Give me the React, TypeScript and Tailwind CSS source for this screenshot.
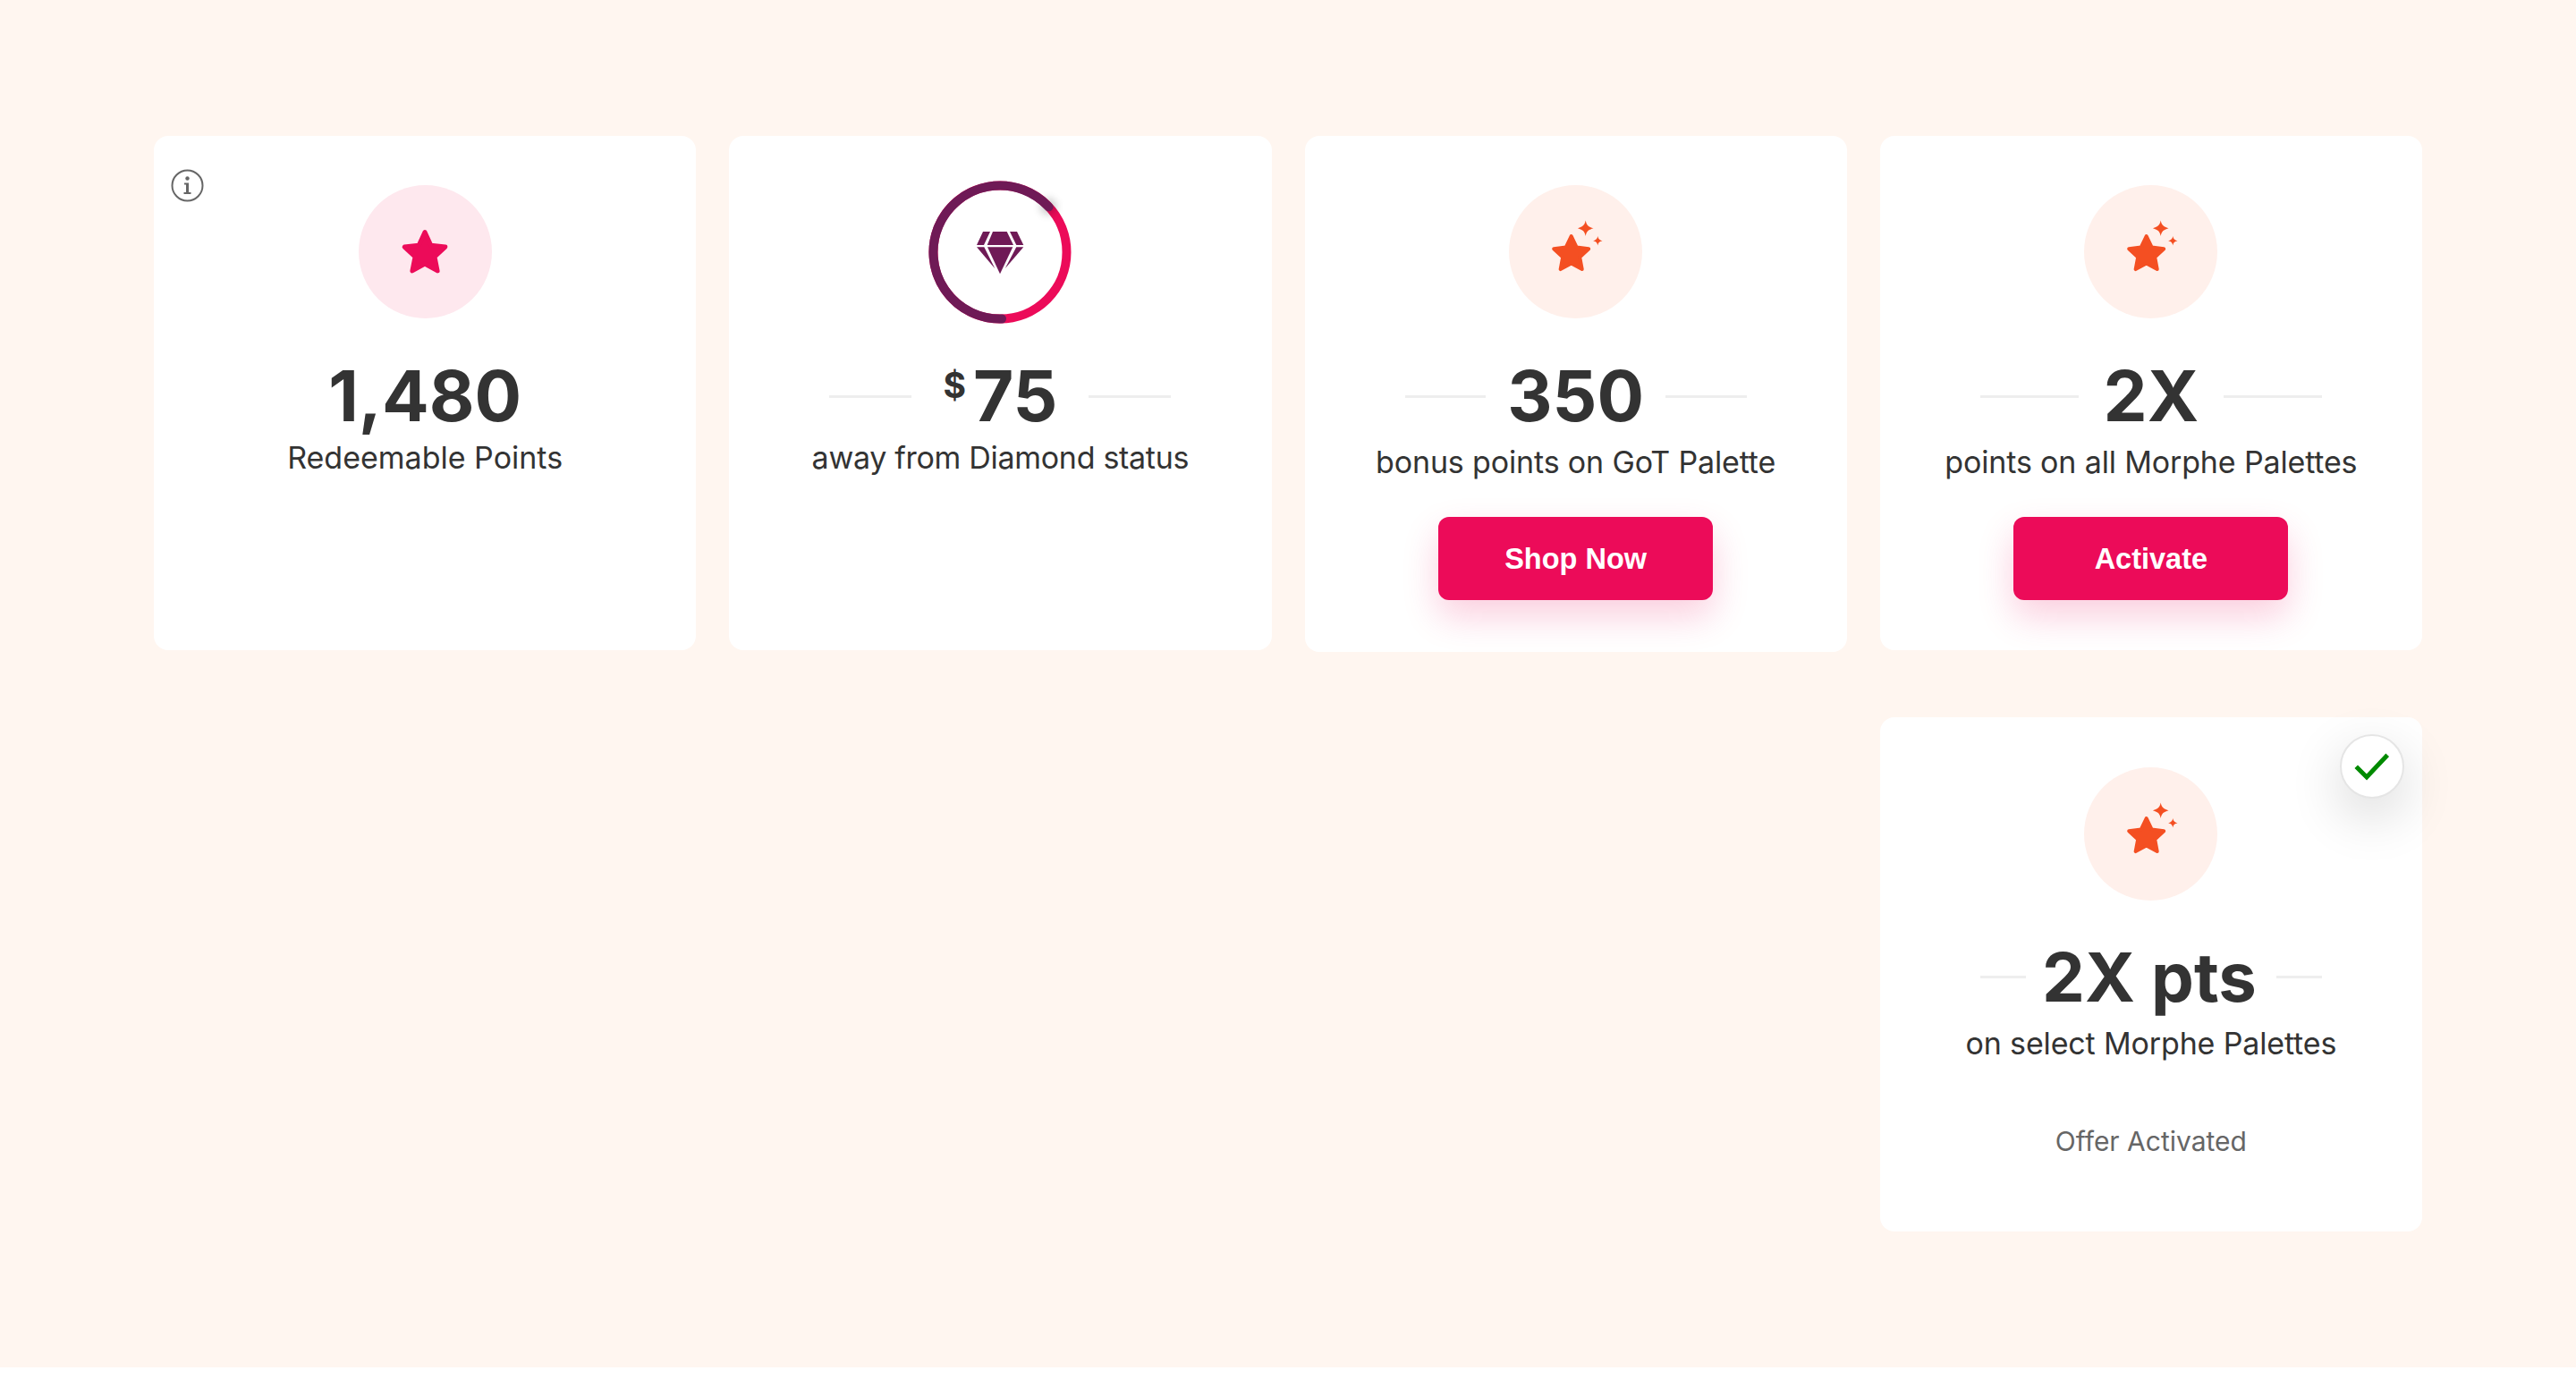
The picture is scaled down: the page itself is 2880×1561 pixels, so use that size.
const FONT = "font-['Inter',sans-serif]";

function starPoints(cx: number, cy: number, R: number, r: number) {
  const pts: string[] = [];
  for (let i = 0; i < 10; i++) {
    const a = (Math.PI / 5) * i - Math.PI / 2;
    const rad = i % 2 === 0 ? R : r;
    pts.push(`${(cx + rad * Math.cos(a)).toFixed(2)},${(cy + rad * Math.sin(a)).toFixed(2)}`);
  }
  return pts.join(" ");
}

function PinkStarIcon() {
  return (
    <div className="mb-px flex h-[149px] w-[149px] items-center justify-center rounded-full bg-[#fee8ee]">
      <svg width="54" height="52" viewBox="0 0 54 52">
        <polygon points={starPoints(27, 27.5, 24, 11.5)} fill="#ec0b59" stroke="#ec0b59" strokeWidth="5" strokeLinejoin="round" />
      </svg>
    </div>
  );
}

function SparkleStarIcon() {
  return (
    <div className="mb-px flex h-[149px] w-[149px] items-center justify-center rounded-full bg-[#fff0eb]">
      <svg width="149" height="149" viewBox="0 0 149 149">
        <polygon points={starPoints(69.7, 77.5, 20.5, 10)} fill="#f44f22" stroke="#f44f22" strokeWidth="4" strokeLinejoin="round" />
        <path d="M85.700 39.500 C86.700 44.500 88.500 46.500 94.500 48.300 C88.500 50 86.700 52 85.700 57 C84.700 52 82.900 50 76.900 48.300 C82.900 46.500 84.700 44.500 85.700 39.500Z" fill="#f44f22" />
        <path d="M99.300 57 C99.900 60 101 61.200 104.500 62.300 C101 63.300 99.900 64.500 99.300 67.500 C98.700 64.500 97.600 63.300 94.100 62.300 C97.600 61.200 98.700 60 99.300 57Z" fill="#f44f22" />
      </svg>
    </div>
  );
}

function DiamondRing() {
  return (
    <div className="-mt-[5px] mb-[-5px] h-[160px] w-[160px]">
      <svg width="160" height="160" viewBox="0 0 160 160">
        <defs>
          <filter id="glow" x="-100%" y="-100%" width="300%" height="300%">
            <feGaussianBlur stdDeviation="5" />
          </filter>
        </defs>
        <circle cx="80" cy="80" r="74.500" fill="none" stroke="#ec0b59" strokeWidth="10" />
        <circle cx="134" cy="29" r="9" fill="#000" opacity="0.22" filter="url(#glow)" />
        <path d="M82 154.500 A74.500 74.500 0 1 1 134.500 29.300" fill="none" stroke="#6f1a56" strokeWidth="10" strokeLinecap="round" />
        <g transform="translate(54 57)" fill="#6f1a56">
          <polygon points="7,0 15,0 8,15 0,15" />
          <polygon points="18,0 33.700,0 41,15 11.700,15" />
          <polygon points="37,0 45,0 52.300,15 44.300,15" />
          <polygon points="0,17.300 8.300,17.300 20.300,41.300" />
          <polygon points="12,17.300 40.300,17.300 26,47.300" />
          <polygon points="44.300,17.300 52.300,17.300 31.700,41.300" />
        </g>
      </svg>
    </div>
  );
}

function InfoIcon() {
  return (
    <svg className="absolute left-[19px] top-[37px]" width="37" height="37" viewBox="0 0 37 37" fill="none">
      <circle cx="18.500" cy="18.500" r="17" stroke="#666666" strokeWidth="2" />
      <circle cx="18.500" cy="10.500" r="2.200" fill="#666666" />
      <path d="M15 15.500h5v10.500h2.500v2h-8v-2h2.500v-8.500h-2z" fill="#666666" />
    </svg>
  );
}

function Line() {
  return <div className="h-[3px] min-w-0 flex-1 bg-[#eeeeee]" />;
}

function Heading({
  children,
  lines = true,
  textClass = "px-6 text-[78px]",
  marginClass = "mt-[43px]",
}: {
  children: React.ReactNode;
  lines?: boolean;
  textClass?: string;
  marginClass?: string;
}) {
  return (
    <div className={`flex h-[86px] w-[382px] items-center justify-center ${marginClass}`}>
      {lines && <Line />}
      <div className={`flex items-start whitespace-nowrap font-bold leading-[86px] text-[#333333] ${textClass}`}>{children}</div>
      {lines && <Line />}
    </div>
  );
}

function Button({ label }: { label: string }) {
  return (
    <button className="mt-[41px] flex h-[93px] w-[307px] items-center justify-center rounded-[12px] bg-[#ec0b59] pt-px font-['Liberation_Sans',sans-serif] text-[32.500px] font-bold text-white shadow-[0_18px_40px_rgba(236,11,89,0.2)]">
      {label}
    </button>
  );
}

function Card({ children, className = "" }: { children: React.ReactNode; className?: string }) {
  return (
    <div className={`relative flex flex-col items-center rounded-[16px] bg-white ${className}`}>
      {children}
    </div>
  );
}

function Label({ children, className = "" }: { children: React.ReactNode; className?: string }) {
  return <p className={`whitespace-nowrap text-[34px] leading-[40px] text-[#333333] ${className}`}>{children}</p>;
}

export default function App() {
  return (
    <div className={`h-[1529px] bg-[#fff6f0] px-[172px] pt-[152px] ${FONT}`}>
      <div className="grid grid-cols-4 items-start gap-x-[37px] gap-y-[73px]">
        <Card className="h-[575px] pt-[55px]">
          <InfoIcon />
          <PinkStarIcon />
          <Heading lines={false}>1,480</Heading>
          <Label className="mt-[6px]">Redeemable Points</Label>
        </Card>
        <Card className="h-[575px] pt-[55px]">
          <DiamondRing />
          <Heading textClass="pl-[35px] pr-[35px] text-[78px]">
            <span className="mr-2 mt-[-12px] text-[39px] font-bold leading-[86px]">$</span>75
          </Heading>
          <Label className="mt-[6px] tracking-[-0.3px]">away from Diamond status</Label>
        </Card>
        <Card className="h-[577px] pt-[55px]">
          <SparkleStarIcon />
          <Heading>350</Heading>
          <Label className="mt-[11px] tracking-[-0.15px]">bonus points on GoT Palette</Label>
          <Button label="Shop Now" />
        </Card>
        <Card className="h-[575px] pt-[55px]">
          <SparkleStarIcon />
          <Heading textClass="px-[28px] text-[78px]">2X</Heading>
          <Label className="mt-[11px] tracking-[-0.15px]">points on all Morphe Palettes</Label>
          <Button label="Activate" />
        </Card>
        <Card className="col-start-4 h-[575px] pt-[56px]">
          <div className="absolute right-[20px] top-[19px] flex h-[72px] w-[72px] items-center justify-center rounded-full border-2 border-[#e5e5e5] bg-white shadow-[0_20px_60px_rgba(0,0,0,0.16)]">
            <svg className="h-[72px] w-[72px] shrink-0" viewBox="0 0 72 72" fill="none">
              <path d="M20 38 L30 48 L51.500 25" stroke="#008a00" strokeWidth="5" strokeLinecap="square" strokeLinejoin="miter" />
            </svg>
          </div>
          <SparkleStarIcon />
          <Heading marginClass="mt-[41px]" textClass="pl-[18px] pr-[22px] text-[76px]">2X pts</Heading>
          <Label className="mt-[12px] tracking-[-0.15px]">on select Morphe Palettes</Label>
          <p className="mt-[71px] text-[30px] leading-[36px] text-[#666666]">Offer Activated</p>
        </Card>
      </div>
    </div>
  );
}
